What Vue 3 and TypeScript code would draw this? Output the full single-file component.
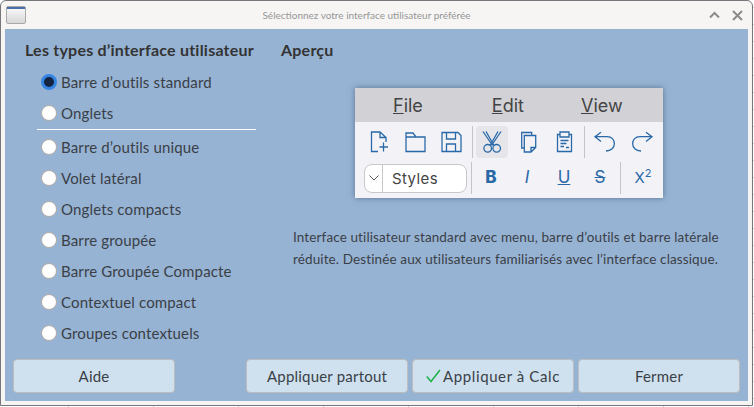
<script setup lang="ts">
const mainModes = ["Barre d’outils standard", 'Onglets']
const otherModes = [
  "Barre d’outils unique",
  'Volet latéral',
  'Onglets compacts',
  'Barre groupée',
  'Barre Groupée Compacte',
  'Contextuel compact',
  'Groupes contextuels',
]
</script>

<template>
  <div class="window">
    <header class="titlebar">
      <div class="app-icon"><span></span></div>
      <div class="title">Sélectionnez votre interface utilisateur préférée</div>
      <svg class="win-btn" width="11" height="8" viewBox="0 0 11 8"><path d="M1 6.500l4.500-4.500 4.500 4.500" fill="none" stroke="#8b8b8b" stroke-width="2" /></svg>
      <svg class="win-btn close" width="11" height="11" viewBox="0 0 11 11"><path d="M1 1l9 9M10 1l-9 9" fill="none" stroke="#8b8b8b" stroke-width="2" /></svg>
    </header>

    <main class="body">
      <div class="columns">
        <section class="modes">
          <h2>Les types d’interface utilisateur</h2>
          <label v-for="(m, i) in mainModes" :key="m" class="radio">
            <span class="dot" :class="{ on: i === 0 }"></span>{{ m }}
          </label>
          <div class="sep"></div>
          <label v-for="m in otherModes" :key="m" class="radio">
            <span class="dot"></span>{{ m }}
          </label>
        </section>

        <section class="preview">
          <h2>Aperçu</h2>
          <div class="mock">
            <div class="menubar">
              <span><u>F</u>ile</span>
              <span><u>E</u>dit</span>
              <span><u>V</u>iew</span>
            </div>
            <div class="tools">
              <div class="row top">
                <div class="cell"><svg class="ic" viewBox="0 0 22 22"><path d="M9 20.500H2.500V1H11l6 5.500V11M11 1v5.500h6M10.500 16H19M14.500 11.500v9" /></svg></div>
                <div class="cell"><svg class="ic" viewBox="0 0 22 22"><path d="M1 20.500V2h7l3 4h9v14.500zM1 6h10" /></svg></div>
                <div class="cell"><svg class="ic" viewBox="0 0 22 22"><path d="M1 1.500h16l3 3v16H1zM5.500 1.500V8h9V1.500M5.500 20.500V13h9v7.500" /></svg></div>
                <i class="vline first"></i>
                <div class="active">
                  <svg class="ic" viewBox="0 0 22 22"><path d="M2 .500l9.500 14M5 .500l8 14M20 .500L10.500 14.500M17 .500l-8 14" /><circle cx="6.700" cy="17.300" r="3.800" /><circle cx="15.700" cy="17.300" r="3.800" /></svg>
                </div>
                <div class="cell"><svg class="ic" viewBox="0 0 22 22"><path d="M7.300 17H4.700V1.500h10V4M7.300 4.500h11.400v12L14 21H7.300zM14 21v-4.500h4.700" /></svg></div>
                <div class="cell"><svg class="ic" viewBox="0 0 22 22"><path d="M7 3.500H4.500v17h14v-17H16M7 1h9v5H7zM7.500 9.500h8M7.500 12.500h6M7.500 15.500H11M13 16.500h3" /></svg></div>
                <i class="vline"></i>
                <div class="cell"><svg class="ic" viewBox="0 0 22 22"><path d="M8 1.300L2 5.700l6 4.800M2 5.700h12c10 0 10 14.300-1 14.300" /></svg></div>
                <div class="cell redo"><svg class="ic" viewBox="0 0 22 22"><path d="M15 1.300l6 4.400-6 4.800M21 5.700H9C-1 5.700-1 20 10 20" /></svg></div>
              </div>
              <div class="row">
                <div class="styles">
                  <span class="drop"><svg width="10" height="6" viewBox="0 0 10 6"><path d="M.500.500 5 5 9.500.500" fill="none" stroke="#555" /></svg></span>
                  <span class="name">Styles</span>
                </div>
                <i class="vline"></i>
                <span class="fmt b">B</span>
                <span class="fmt it">I</span>
                <span class="fmt un">U</span>
                <span class="fmt st">S</span>
                <i class="vline"></i>
                <span class="fmt sup">X<sup>2</sup></span>
              </div>
            </div>
          </div>
          <p class="desc">Interface utilisateur standard avec menu, barre d’outils et barre latérale réduite. Destinée aux utilisateurs familiarisés avec l’interface classique.</p>
        </section>
      </div>

      <footer class="actions">
        <button class="btn">Aide</button>
        <div class="right">
          <button class="btn">Appliquer partout</button>
          <button class="btn apply">
            <svg width="15" height="14" viewBox="0 0 15 14"><path d="M.800 7.500l4.200 5L14 1" fill="none" stroke="#22b14c" stroke-width="1.600" /></svg>Appliquer à Calc
          </button>
          <button class="btn">Fermer</button>
        </div>
      </footer>
    </main>
  </div>
</template>

<style>
html, body { margin: 0; }
/* the spreadsheet grid behind the dialog only shows at its right and bottom edge */
html {
  background-color: #fff;
  background-image:
    repeating-linear-gradient(90deg, transparent 0 68px, #cfcfcf 68px 69px, transparent 69px 85px),
    repeating-linear-gradient(180deg, transparent 0 7px, #cfcfcf 7px 8px, transparent 8px 17px);
}
</style>

<style scoped>
.window {
  width: 753px;
  height: 406px;
  box-sizing: border-box;
  display: flex;
  flex-direction: column;
  background: #f6f5f4;
  border: 1px solid #77767b;
  border-radius: 6px 6px 0 0;
  padding: 0 4px 4px 4px;
  font-family: Lato, "Open Sans", sans-serif;
  color: #3a3f47;
  overflow: hidden;
}
.titlebar {
  height: 28px;
  flex: none;
  display: flex;
  align-items: center;
}
.app-icon {
  width: 20px;
  height: 18px;
  margin: 0 0 0 1px;
  box-sizing: border-box;
  border: 1px solid #a9a9a9;
  border-radius: 2px;
  background: linear-gradient(#fafafa, #d8d8d8);
}
.app-icon span { display: block; height: 2px; background: #4a6ea9; }
.title {
  flex: 1;
  padding-right: 2px;
  text-align: center;
  font-size: 10px;
  color: #969696;
}
.win-btn { flex: none; }
.win-btn.close { margin: 0 5px 0 12px; }
.body {
  flex: 1;
  display: flex;
  flex-direction: column;
  background: #97b3d3;
  padding: 0 8px 8px 8px;
  min-height: 0;
}
.columns { flex: 1; display: flex; min-height: 0; }
h2 {
  margin: 0;
  font-size: 16px;
  font-weight: 700;
  color: #333;
  line-height: 20px;
  letter-spacing: 0.22px;
}
.modes { width: 268px; padding: 11px 0 0 12px; box-sizing: border-box; flex: none; }
.modes h2 { margin-bottom: 6px; white-space: nowrap; }
.radio {
  display: flex;
  align-items: center;
  gap: 4px;
  height: 31px;
  padding-left: 16px;
  font-size: 15px;
  letter-spacing: 0.15px;
}
.dot {
  width: 16px;
  height: 16px;
  box-sizing: border-box;
  border-radius: 50%;
  background: #fff;
  border: 1px solid #b3aca6;
}
.dot.on {
  background: #14233f;
  border: 3px solid #3584e4;
}
.sep { height: 1px; background: #fff; margin: 1px 0 1px 12px; width: 219px; }
.preview { flex: 1; padding: 11px 0 0 0; }
.mock {
  width: 308px;
  margin: 28px 0 0 74px;
  box-shadow: 0 0 6px rgba(40, 60, 90, 0.55);
  background: #f2f2f7;
  font-family: Inter, sans-serif;
}
.menubar {
  height: 34px;
  background: #d1d1d6;
  display: flex;
  align-items: center;
  font-size: 18px;
  color: #444;
}
.menubar span:nth-child(1) { margin-left: 38px; }
.menubar span:nth-child(2) { margin-left: 69px; }
.menubar span:nth-child(3) { margin-left: 57px; }
.tools { padding: 4px 0 4px 9px; }
.row { display: flex; align-items: center; height: 32px; }
.row.top { margin-bottom: 4px; margin-left: -2px; }
.cell { width: 36px; height: 32px; flex: none; display: flex; align-items: center; justify-content: center; }
.cell.redo { margin-left: 2px; }
.ic {
  width: 22px;
  height: 22px;
  flex: none;
  fill: none;
  stroke: #2a69a8;
  stroke-width: 1.300;
  overflow: visible;
}
.vline { width: 1px; height: 32px; background: #c4c4c8; flex: none; margin: 0 1px 0 2px; }
.vline.first { margin-right: 3px; }
.active {
  width: 32px;
  height: 32px;
  flex: none;
  display: flex;
  align-items: center;
  justify-content: center;
  background: #e5e5ea;
  border-radius: 4px;
  margin-right: 2px;
}
.styles {
  width: 103px;
  height: 29px;
  flex: none;
  box-sizing: border-box;
  display: flex;
  background: #fff;
  border: 1px solid #c7c7cc;
  border-radius: 8px;
  margin-right: 2px;
}
.drop { width: 17px; border-right: 1px solid #c7c7cc; display: flex; align-items: center; justify-content: center; }
.name { margin-left: 9px; font-size: 15px; line-height: 27px; color: #444; letter-spacing: 0.4px; }
.fmt { width: 36px; flex: none; text-align: center; font-size: 17px; color: #2a69a8; padding-bottom: 2px; }
.fmt.b { font-weight: 800; font-size: 17px; }
.fmt.it { font-style: italic; }
.fmt.un { text-decoration: underline; margin-left: 1px; }
.fmt.st { text-decoration: line-through; }
.fmt.sup { width: 42px; font-size: 15px; }
.fmt sup { font-size: 11px; line-height: 0; }
.desc {
  margin: 28px 0 0 12px;
  width: 450px;
  font-size: 13.500px;
  line-height: 22px;
  letter-spacing: 0.12px;
}
.actions { display: flex; justify-content: space-between; flex: none; }
.right { display: flex; gap: 4px; }
.btn {
  height: 34px;
  width: 162px;
  box-sizing: border-box;
  display: flex;
  align-items: center;
  justify-content: center;
  background: #cfe1ee;
  border: 1px solid #bdbdbd;
  border-radius: 4px;
  font-family: inherit;
  font-size: 15px;
  letter-spacing: 0.2px;
  color: #3a3f47;
  padding: 0;
}
.btn.apply { gap: 2px; letter-spacing: 0.6px; }
</style>
